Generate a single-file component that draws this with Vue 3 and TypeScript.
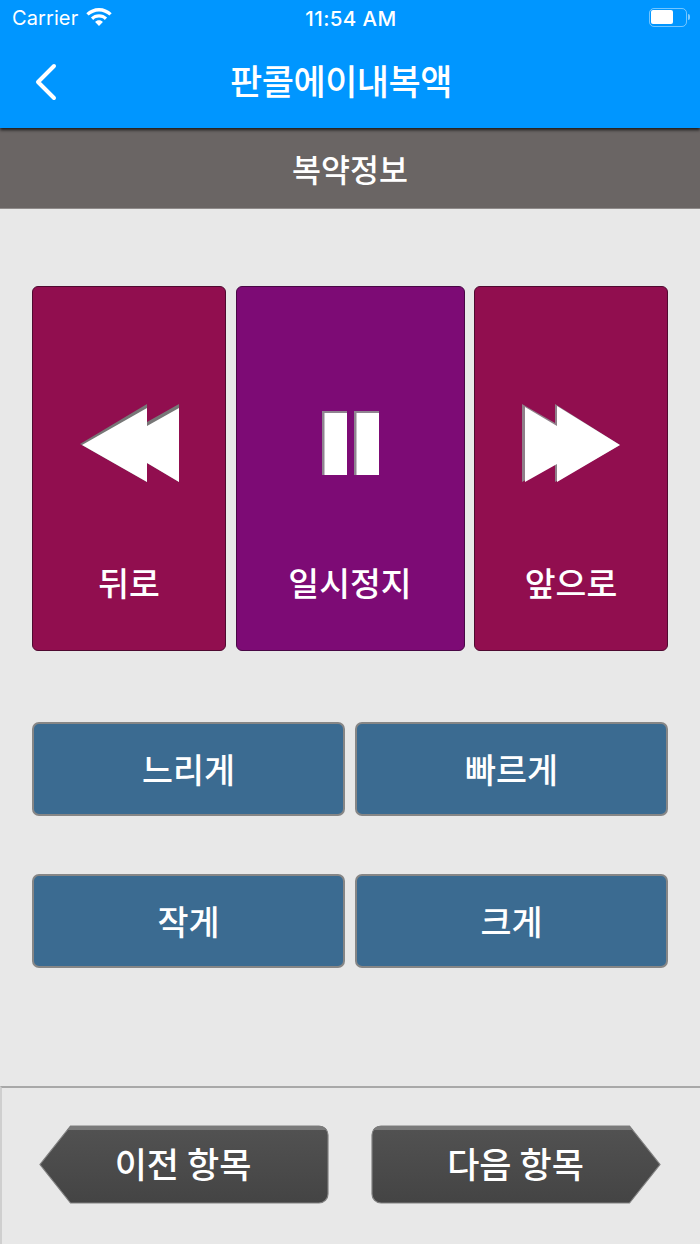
<script setup lang="ts">
const title = '판콜에이내복액'
const subtitle = '복약정보'
const speedRows: string[][] = [['느리게', '빠르게'], ['작게', '크게']]
</script>

<template>
  <div class="screen">
    <header class="nav">
      <div class="status">
        <div class="status-left">
          <span class="carrier">Carrier</span>
          <svg class="wifi" width="26" height="18" viewBox="0 0 26 18" fill="#fff">
            <path d="M13 0C8.100 0 3.600 2 .3 5.200l2.300 2.400C5.300 5 9 3.400 13 3.400s7.700 1.600 10.400 4.200l2.300-2.400C22.400 2 17.900 0 13 0z" />
            <path d="M13 6.200c-3.100 0-6 1.200-8.100 3.300l2.300 2.400c1.500-1.500 3.500-2.300 5.800-2.300s4.300.8 5.800 2.300l2.300-2.400C19 7.400 16.100 6.200 13 6.200z" />
            <path d="M13 12.300c-1.500 0-2.900.6-3.900 1.600L13 18l3.900-4.100c-1-1-2.400-1.600-3.900-1.600z" />
          </svg>
        </div>
        <span class="time">11:54 AM</span>
        <div class="battery">
          <span class="battery-body"><span class="battery-fill"></span></span>
          <span class="battery-cap"></span>
        </div>
      </div>
      <div class="nav-row">
        <svg class="back" width="26" height="38" viewBox="0 0 26 38" fill="none" stroke="#fff" stroke-width="4" stroke-linecap="round" stroke-linejoin="round">
          <path d="M20 3 4 19l16 16" />
        </svg>
        <h1 class="title">{{ title }}</h1>
      </div>
    </header>

    <div class="subbar">{{ subtitle }}</div>

    <main class="content">
      <section class="media">
        <button class="media-btn crimson">
          <svg class="media-icon" width="192" height="80" viewBox="33 403 192 80">
            <defs>
              <filter id="softdark" x="-10%" y="-10%" width="120%" height="120%" color-interpolation-filters="sRGB">
                <feGaussianBlur stdDeviation="0.6" />
              </filter>
              <filter id="softwhite" x="-10%" y="-10%" width="120%" height="120%" color-interpolation-filters="sRGB">
                <feGaussianBlur stdDeviation="0.7" />
              </filter>
            </defs>
            <path filter="url(#softdark)" fill="#777" d="M80 444 147 404v18l32-18v78l-32-19v19z" />
            <path filter="url(#softwhite)" fill="#fff" d="M82 445 147 408v18l32-18v74l-32-19v19z" />
          </svg>
          <span class="media-label">뒤로</span>
        </button>
        <button class="media-btn purple">
          <svg class="media-icon" width="227" height="80" viewBox="237 403 227 80">
            <path filter="url(#softdark)" fill="#8f8490" d="M322 411h25v64h-25zM354 411h25v64h-25z" />
            <path filter="url(#softwhite)" fill="#fff" d="M324.500 413h22.500v62h-22.500zM356.500 413h22.500v62h-22.500z" />
          </svg>
          <span class="media-label">일시정지</span>
        </button>
        <button class="media-btn crimson">
          <svg class="media-icon" width="192" height="80" viewBox="475 403 192 80">
            <path filter="url(#softdark)" fill="#8f7f89" d="M522 404 555 423v-19l65 41-65 37v-18l-33 18z" />
            <path filter="url(#softwhite)" fill="#fff" d="M525 407 557 426v-20l63 39-63 37v-18l-32 18z" />
          </svg>
          <span class="media-label">앞으로</span>
        </button>
      </section>

      <section v-for="row in speedRows" :key="row[0]" class="pair">
        <button v-for="label in row" :key="label" class="pair-btn">{{ label }}</button>
      </section>
    </main>

    <footer class="footer">
      <button class="step prev">
        <svg class="step-bg" width="290" height="79" viewBox="0 0 290 79">
          <defs>
            <linearGradient id="stepfill" x1="0" y1="0" x2="0" y2="1">
              <stop offset="0" stop-color="#525252" />
              <stop offset="1" stop-color="#444444" />
            </linearGradient>
          </defs>
          <path d="M31.500 1H280a9 9 0 0 1 9 9v59a9 9 0 0 1-9 9H31.500L1 39.500z" fill="url(#stepfill)" stroke="#808080" stroke-width="1.200" />
          <path d="M31.500 1H280a9 9 0 0 1 8 4H28z" fill="#7a7a7a" />
        </svg>
        <span class="step-label">이전 항목</span>
      </button>
      <button class="step next">
        <svg class="step-bg" width="290" height="79" viewBox="0 0 290 79">
          <path d="M258.500 1H10a9 9 0 0 0-9 9v59a9 9 0 0 0 9 9h248.500L289 39.500z" fill="url(#stepfill)" stroke="#808080" stroke-width="1.200" />
          <path d="M258.500 1H10a9 9 0 0 0-8 4h260z" fill="#7a7a7a" />
        </svg>
        <span class="step-label">다음 항목</span>
      </button>
    </footer>
  </div>
</template>

<style>
html, body { margin: 0; background: #e8e8e8; }
</style>

<style scoped>
.screen {
  width: 700px;
  height: 1244px;
  display: flex;
  flex-direction: column;
  overflow: hidden;
  background: #e8e8e8;
  font-family: "Noto Sans CJK KR", "Noto Sans", sans-serif;
  color: #fff;
}
.nav {
  height: 128px;
  flex: none;
  background: #0096ff;
  display: flex;
  flex-direction: column;
  box-shadow: 0 2px 3px rgba(0, 0, 0, 0.75);
  position: relative;
  z-index: 1;
}
.status {
  height: 36px;
  padding: 0 10px 0 12px;
  display: grid;
  grid-template-columns: 1fr auto 1fr;
  align-items: center;
  font-family: Inter, "Liberation Sans", sans-serif;
}
.status-left { display: flex; align-items: center; gap: 8px; }
.carrier { font-size: 20px; letter-spacing: 0.1px; }
.wifi { margin-top: -2px; }
.time { font-size: 20.5px; font-weight: 500; letter-spacing: 0.4px; }
.battery { justify-self: end; display: flex; align-items: center; margin-top: -2px; }
.battery-body {
  width: 33px;
  height: 14px;
  border: 1.500px solid rgba(255, 255, 255, 0.45);
  border-radius: 5px;
  padding: 1.500px;
  display: block;
}
.battery-fill { display: block; width: 22px; height: 100%; background: #fff; border-radius: 2px; }
.battery-cap { width: 2px; height: 6px; margin-left: 1.500px; background: rgba(255, 255, 255, 0.5); border-radius: 0 2px 2px 0; }
.nav-row {
  flex: 1;
  position: relative;
  display: flex;
  align-items: center;
  justify-content: center;
  padding-bottom: 6px;
  padding-right: 18px;
}
.back { position: absolute; left: 34px; top: 27px; }
.title { margin: 0; font-size: 35px; font-weight: 500; letter-spacing: -0.5px; line-height: 1; }
.subbar {
  height: 81px;
  flex: none;
  display: flex;
  align-items: center;
  justify-content: center;
  background: #6a6564;
  font-size: 31.500px;
  font-weight: 500;
  padding-bottom: 1px;
  border-bottom: 1px solid #8f8b8a;
  box-sizing: border-box;
}
.content {
  flex: 1;
  padding: 77px 32px 0;
  display: flex;
  flex-direction: column;
}
button {
  font: inherit;
  color: inherit;
  padding: 0;
  cursor: pointer;
}
.media {
  display: grid;
  grid-template-columns: 194px 229px 194px;
  justify-content: space-between;
  height: 365px;
  margin-bottom: 71px;
}
.media-btn {
  display: flex;
  flex-direction: column;
  align-items: center;
  border-radius: 6px;
  padding-top: 116px;
}
.media-icon { display: block; flex: none; }
.crimson { background: #910e4f; border: 1px solid #4f0a30; }
.purple { background: #7d0b75; border: 1px solid #480845; }
.media-label { margin-top: 77px; font-size: 33.500px; font-weight: 500; line-height: 44px; }
.pair {
  display: grid;
  grid-template-columns: 1fr 1fr;
  gap: 10px;
  height: 94px;
  margin-bottom: 58px;
}
.pair-btn {
  background: #3b6b91;
  border: 2px solid #868686;
  border-radius: 7px;
  font-size: 33.700px;
  font-weight: 500;
  padding-bottom: 2px;
}
.footer {
  height: 158px;
  flex: none;
  box-sizing: border-box;
  border-top: 2px solid #a8a8a8;
  border-left: 2px solid #cfcfcf;
  display: flex;
  justify-content: space-between;
  align-items: center;
  padding: 0 38px 4px 36px;
  background: #e8e8e8;
}
.step {
  position: relative;
  height: 79px;
  width: 291px;
  background: none;
  border: 0;
  display: flex;
  align-items: center;
  justify-content: center;
  padding-bottom: 3px;
}
.step-bg { position: absolute; top: 0; left: 1px; }
.next .step-bg { left: 0; }
.step-label { position: relative; font-size: 35px; font-weight: 500; line-height: 1; }
.prev .step-label { margin-left: -1px; }
.next .step-label { margin-left: -2px; }
</style>
